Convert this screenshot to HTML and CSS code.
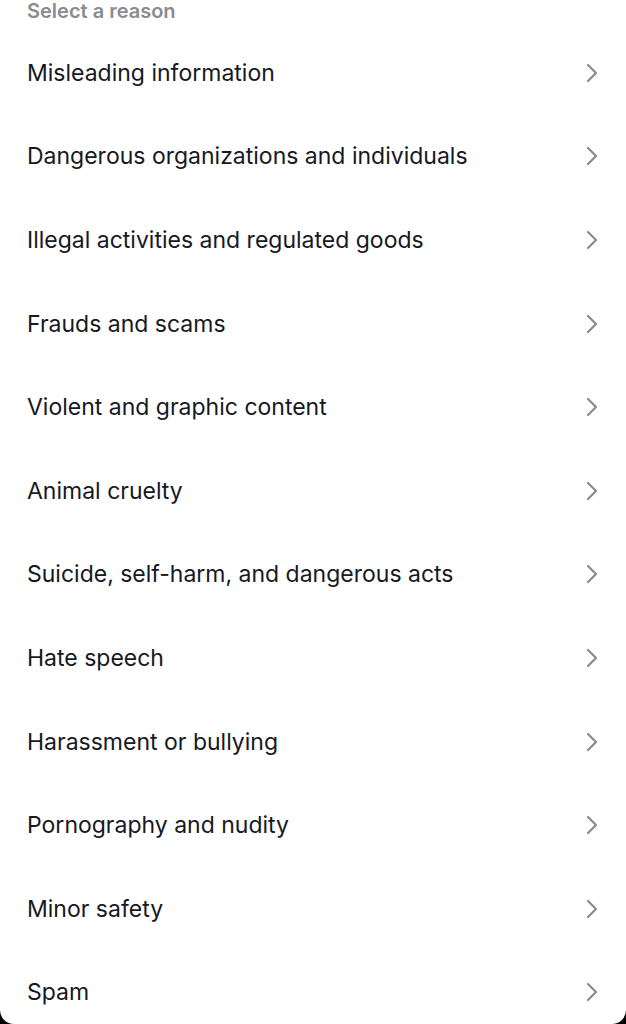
FILE: index.html
```html
<!DOCTYPE html>
<html lang="en">
<head>
    <meta charset="UTF-8">
    <meta name="viewport" content="width=device-width, initial-scale=1.0">
    <title>Report</title>
    <link rel="stylesheet" href="styles.css">
</head>
<body>

    <div class="sheet">
        <div class="sheet-title">Select a reason</div>

        <ul class="reasons">
            <li class="reason"><span>Misleading information</span><svg class="chev" viewBox="0 0 12 20"><path d="M2 2l8 8-8 8"/></svg></li>
            <li class="reason"><span>Dangerous organizations and individuals</span><svg class="chev" viewBox="0 0 12 20"><path d="M2 2l8 8-8 8"/></svg></li>
            <li class="reason"><span>Illegal activities and regulated goods</span><svg class="chev" viewBox="0 0 12 20"><path d="M2 2l8 8-8 8"/></svg></li>
            <li class="reason"><span>Frauds and scams</span><svg class="chev" viewBox="0 0 12 20"><path d="M2 2l8 8-8 8"/></svg></li>
            <li class="reason"><span>Violent and graphic content</span><svg class="chev" viewBox="0 0 12 20"><path d="M2 2l8 8-8 8"/></svg></li>
            <li class="reason"><span>Animal cruelty</span><svg class="chev" viewBox="0 0 12 20"><path d="M2 2l8 8-8 8"/></svg></li>
            <li class="reason"><span>Suicide, self-harm, and dangerous acts</span><svg class="chev" viewBox="0 0 12 20"><path d="M2 2l8 8-8 8"/></svg></li>
            <li class="reason"><span>Hate speech</span><svg class="chev" viewBox="0 0 12 20"><path d="M2 2l8 8-8 8"/></svg></li>
            <li class="reason"><span>Harassment or bullying</span><svg class="chev" viewBox="0 0 12 20"><path d="M2 2l8 8-8 8"/></svg></li>
            <li class="reason"><span>Pornography and nudity</span><svg class="chev" viewBox="0 0 12 20"><path d="M2 2l8 8-8 8"/></svg></li>
            <li class="reason"><span>Minor safety</span><svg class="chev" viewBox="0 0 12 20"><path d="M2 2l8 8-8 8"/></svg></li>
            <li class="reason"><span>Spam</span><svg class="chev" viewBox="0 0 12 20"><path d="M2 2l8 8-8 8"/></svg></li>
        </ul>
    </div>

</body>
</html>
```

FILE: styles.css
```css
* { margin: 0; padding: 0; box-sizing: border-box; }
html, body { height: 100%; }
body { background: #000; font-family: Inter, "Liberation Sans", sans-serif; color: #161823; }

.sheet {
    height: 1024px;
    background: #fff;
    border-radius: 0 0 14px 14px;
    overflow: hidden;
}
.sheet-title {
    height: 31px;
    padding: 0 27px;
    font-size: 20px;
    font-weight: 600;
    line-height: 22px;
    color: #8a8b91;
}

.reasons { list-style: none; }
.reason {
    display: flex;
    align-items: center;
    justify-content: space-between;
    height: 83.6px;
    padding: 0 28px 0 27px;
    font-size: 23px;
}
.chev {
    width: 12px;
    height: 20px;
    fill: none;
    stroke: #8a8b91;
    stroke-width: 2.2;
    stroke-linecap: round;
    stroke-linejoin: round;
}
```
